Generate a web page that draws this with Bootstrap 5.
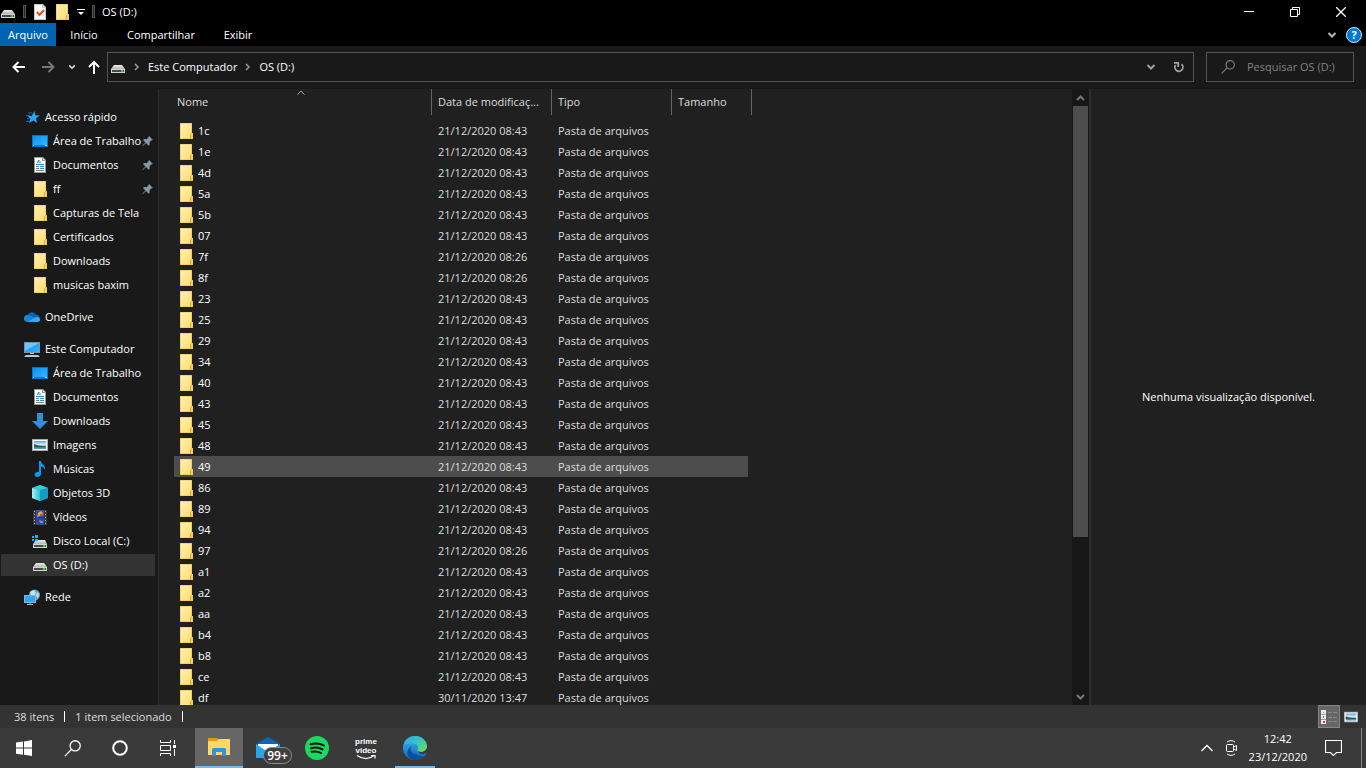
<!DOCTYPE html>
<html lang="pt-BR" data-bs-theme="dark">
<head>
<meta charset="utf-8">
<meta name="viewport" content="width=device-width, initial-scale=1">
<title>OS (D:)</title>
<link href="https://cdn.jsdelivr.net/npm/bootstrap@5.3.0/dist/css/bootstrap.min.css" rel="stylesheet">
<style>
  body { font: 11px/16px "Open Sans", "Noto Sans", sans-serif; color: #fff; background: #202020; }
  button { background: none; border: 0; padding: 0; color: inherit; font: inherit; }
  a { color: inherit; text-decoration: none; }
  svg { display: block; flex: none; }
  .title-bar { height: 23px; background: #000; gap: 7px; padding-right: 2px; }
  .tool-sep { width: 3px; height: 13px; border: 1px solid #555; background: #222; }
  .win-btn { width: 46px; height: 23px; display: flex; align-items: center; justify-content: center; }
  .ribbon { height: 23px; background: #000; }
  .ribbon a { line-height: 23px; text-align: center; width: 56px; }
  .ribbon a.wide { width: 98px; }
  .ribbon a.active { background: #0063b1; }
  .ribbon button { margin-left: 9px; }
  .address-row { height: 43px; background: #191919; padding: 0 12px 1px; }
  .nav-tools { gap: 12px; margin-right: 7px; }
  .address-box, .search-box { height: 30px; border: 1px solid #535353; }
  .address-box { gap: 8px; padding: 0 7px 0 2px; }
  .search-box { width: 148px; margin-left: 12px; padding-left: 14px; gap: 12px; }
  .search-box input { background: none; border: 0; color: #8a8a8a; padding: 0; outline: 0; font: inherit; min-width: 0; width: 100%; }
  .search-box input::placeholder { color: #838383; opacity: 1; }
  .work-area { min-height: 0; }
  .tree { width: 159px; background: #191919; border-right: 1px solid #2b2b2b; padding-top: 16px; padding-right: 3px; }
  .tree a { height: 24px; border: solid #191919; border-width: 1px 0 1px 1px; white-space: nowrap; }
  .tree a > svg { margin-right: 5px; }
  .tree a > .pin-mark { margin-left: auto; margin-right: 1px; }
  .tree .root { padding-left: 23px; }
  .tree .leaf { padding-left: 31px; }
  .tree .current { background: #333; }
  .tree ul + ul { margin-top: 8px; }
  .files { width: 578px; table-layout: fixed; margin-left: 15px; border-collapse: collapse; color: #dedede; }
  .files th { height: 31px; padding: 0; font-weight: 400; vertical-align: top; }
  .files th > div { height: 26px; border-right: 1px solid #636363; padding-left: 6px; display: flex; align-items: center; position: relative; white-space: nowrap; }
  .files th:first-child > div { padding-left: 3px; }
  .files td { height: 21px; padding: 0 0 0 6px; line-height: 20px; white-space: nowrap; }
  .files td svg { margin-top: 2px; }
  .files td:first-child { color: #fff; padding-left: 4px; }
  .files td > div { gap: 4px; }
  .files .picked td:not(:last-child) { background: #4d4d4d; }
  .files td:last-child { padding: 0; }
  .col-name { width: 258px; }
  .col-mid { width: 120px; }
  .col-size { width: 76px; }
  .col-end { width: 4px; }
  .sort-mark { position: absolute; left: 123px; top: 1px; }
  .scroll-track { width: 17px; background: #171717; padding: 0 1px; }
  .scroll-thumb { height: 74%; background: #4d4d4d; }
  .scroll-arrow { height: 17px; display: flex; align-items: center; justify-content: center; width: 100%; }
  .preview { width: 277px; border-left: 2px solid #2e2e2e; }
  .status-bar { height: 23px; background: #333; color: #dedede; padding-left: 14px; gap: 10px; }
  .status-sep { width: 1px; height: 11px; background: #fff; }
  .view-btn { width: 22px; height: 23px; display: flex; align-items: center; justify-content: center; }
  .view-btn.on { background: #666; border: 1px solid #858585; }
  .task-bar { height: 40px; background: #3a3a3a; }
  .task-btn { width: 48px; height: 40px; display: flex; align-items: center; justify-content: center; position: relative; }
  .task-btn.front { background: #666; border-bottom: 2px solid #76b9ed; }
  .task-btn.open::after { content: ""; position: absolute; left: 4px; right: 4px; bottom: 0; height: 2px; background: #76b9ed; }
  .apps { gap: 1px; margin-left: 3px; }
  .mail-count { position: absolute; left: 19px; top: 19px; width: 29px; height: 17px; border: 1px solid #8c8c8c; border-radius: 9px; background: #3f3f3f; font-size: 12px; line-height: 15px; font-weight: 600; }
  .prime { font: 700 8px/9px "Liberation Sans", sans-serif; }
  .tray { gap: 12px; }
  .clock { line-height: 18px; text-align: center; }
  .notice { margin: 0 7px 0 6px; }
  .desk-edge { width: 5px; height: 40px; border-left: 1px solid #858585; }
</style>
</head>
<body>
<svg width="0" height="0" class="position-absolute" aria-hidden="true">
  <defs>
    <linearGradient id="gold" x2="1" y2="1"><stop stop-color="#fff0b4"/><stop offset="1" stop-color="#ffdc70"/></linearGradient>
    <linearGradient id="blue" x2="1" y2="1"><stop stop-color="#0f92f5"/><stop offset="1" stop-color="#35b2ff"/></linearGradient>
    <linearGradient id="sea" x2="0" y2="1"><stop stop-color="#5d9de6"/><stop offset=".45" stop-color="#d6efff"/><stop offset=".6" stop-color="#8cc0c8"/><stop offset="1" stop-color="#4b93c6"/></linearGradient>
    <linearGradient id="metal" x2="0" y2="1"><stop stop-color="#eee"/><stop offset="1" stop-color="#b4b4b4"/></linearGradient>
    <linearGradient id="cube" x2="1"><stop stop-color="#a8f4f4"/><stop offset="1" stop-color="#29c2d0"/></linearGradient>
    <linearGradient id="edgeBlue" x2="0" y2="1"><stop stop-color="#35b8ee"/><stop offset="1" stop-color="#1068c0"/></linearGradient>
    <linearGradient id="edgeGreen" x2="1" y2="1"><stop stop-color="#2fa4e8"/><stop offset=".5" stop-color="#36c7c0"/><stop offset="1" stop-color="#75e53c"/></linearGradient>
  </defs>
  <symbol id="folder" viewBox="0 0 16 16"><path d="M2 0h12v10h1v6H2z" fill="#e8bd3d"/><path d="M2.500.5h11v10l-.5 1v4H2.500z" fill="url(#gold)"/><path d="M13.500 10.500h1v5h-1z" fill="#ffe07c"/><path d="M12.500 15.500v-4l1-1" stroke="#dcae2d" fill="none"/></symbol>
  <symbol id="drive" viewBox="0 0 16 16"><path d="M4 6h8l3 4H1z" fill="url(#metal)"/><path d="M1 10h14v4H1z" fill="#d2d2d2"/><path d="M2 11h12v2H2z" fill="#4a4a4a"/><path d="M11 11h2v2h-2z" fill="#35d835"/></symbol>
  <symbol id="cdrive" viewBox="0 0 16 16"><path d="M4 7h9l2 4H1z" fill="url(#metal)"/><path d="M1 11h14v4H1z" fill="#d2d2d2"/><path d="M2 12h12v2H2z" fill="#4a4a4a"/><path d="M11 12h2v2h-2z" fill="#35d835"/><path d="M0 3h2v2H0zm3-1h3v3H3zM0 6h2v2H0zm3 0h3v2H3z" fill="#19b4ef"/></symbol>
  <symbol id="desktop" viewBox="0 0 16 16"><path d="M0 2h16v12H0z" fill="#0078d7"/><path d="M1 3h14v9H1z" fill="url(#blue)"/><path d="M1 12.500h1m11 0h2" stroke="#fff"/></symbol>
  <symbol id="doc" viewBox="0 0 16 16"><path d="M2 0h9l3 3v13H2z" fill="#999"/><path d="M3 1h7v3h3v11H3z" fill="#fff"/><path d="M11 1v2h2" fill="#ddd"/><path d="M5 6l2-3v3m1-1h1M4 7.500h8M8 9.500h4M8 11.500h4" stroke="#188fd5" fill="none"/><path d="M4 9.500h3M4 11.500h3M4 13.500h8" stroke="#73818d"/></symbol>
  <symbol id="star" viewBox="0 0 16 16"><path d="M10.500 2l.8 4.200 4.700.3-4 2.700 1 4.800-3.500-2.500L5 14l1.500-4.500L3.500 7h4.200z" fill="#28a8f3"/><path d="M4 4h4M2 6.500h4M3 9.500h3M2 12.500h3" stroke="#126cab"/></symbol>
  <symbol id="pin" viewBox="0 0 12 12"><path d="M7 1l4 4-1.500.3-2 2 .2 2.500-1 1L4 8 1 11l-.5-.5 3-3L1 5l1-1 2.500.3 2-2z" fill="#8c979f"/></symbol>
  <symbol id="cloud" viewBox="0 0 16 16"><path d="M4 11a4 4 0 01.5-6A4.500 4.500 0 0112 5.500 4 4 0 0115 12z" fill="#0a63b6"/><path d="M3 13A3.500 3.500 0 014 6l7 3 2 4z" fill="#1686d8"/><path d="M4 13l7-4.500c3-1 5 0 5 2.500 0 1-1 2-2 2z" fill="#38a9ee"/></symbol>
  <symbol id="pc" viewBox="0 0 16 16"><path d="M0 1h16v11H0z" fill="#7895a8"/><path d="M1 2h14v9H1z" fill="url(#blue)"/><path d="M1 2h14L1 10z" fill="#6ac5ff"/><path d="M6 12h4v1H6zM2 14h12l2 2H0z" fill="#b7cad5"/></symbol>
  <symbol id="down" viewBox="0 0 16 16"><path d="M5 0h6v8h5l-8 8-8-8h5z" fill="#2f8de4"/></symbol>
  <symbol id="image" viewBox="0 0 16 16"><path d="M0 2h16v12H0z" fill="#aaa"/><path d="M1 3h14v10H1z" fill="#fff"/><path d="M2 4h12v8H2z" fill="url(#sea)"/><path d="M2 7l4 1.500 8 1v1H2z" fill="#2b5951"/></symbol>
  <symbol id="music" viewBox="0 0 16 16"><path d="M7 0h2c0 4 5 3.500 4 9-1-3-3-3.500-4-3.500V13c0 2-2 3-4 3-3 0-3.500-4 0-5h2z" fill="#069af3"/></symbol>
  <symbol id="cube3d" viewBox="0 0 16 16"><path d="M0 3l8-3 8 3v10l-8 3-8-3z" fill="#19b0c5"/><path d="M0 3l8 2v11l-8-3z" fill="url(#cube)"/><path d="M0 3l8-3 8 3-8 2z" fill="#40c7d2"/><path d="M8 5l8-2v10l-8 3z" fill="#149cc2"/></symbol>
  <symbol id="video" viewBox="0 0 16 16"><path d="M1 1h14v15H1z" fill="#3b3b3b"/><path d="M4 1h8v7H4z" fill="#37529c"/><path d="M4 9h8v7H4z" fill="#2a4a9b"/><path d="M6 4l3-2 2 2-2 3H6z" fill="#d8b038"/><path d="M8 5h3v2H8zM7 11h2v2H7z" fill="#d14b3c"/><path d="M5 6h2v2H5zM8 12h3v2H8z" fill="#4d9ddc"/><path d="M2.500 2v14M13.500 2v14" stroke="#aaa" stroke-dasharray="1 2"/></symbol>
  <symbol id="net" viewBox="0 0 16 16"><circle cx="10.500" cy="6" r="5.500" fill="#6aa5c0"/><path d="M6 3l4-2 2 3-2 3-3-1zm7 0l2 2-1 4-2-2z" fill="#c5e3ec"/><path d="M0 6h12v8H0z" fill="#8bb4cd"/><path d="M1 7h10v6H1z" fill="#2ba7fc"/><path d="M3 15.500h6M6 14v2" stroke="#a5bac6"/></symbol>
  <symbol id="chev-d" viewBox="0 0 10 6"><path d="M1.500 1L5 4.500 8.500 1" fill="none" stroke="currentColor" stroke-width="2"/></symbol>
  <symbol id="lens" viewBox="0 0 16 16"><circle cx="10.500" cy="5.500" r="4.800" fill="none" stroke="currentColor" stroke-width="1.200"/><path d="M7 9L.8 15.200" stroke="currentColor" stroke-width="1.200"/></symbol>
</svg>

<div class="d-flex flex-column vh-100 overflow-hidden">
  <header>
    <div class="title-bar d-flex align-items-center">
      <svg width="16" height="16"><use href="#drive"/></svg>
      <span class="tool-sep"></span>
      <button aria-label="Propriedades"><svg width="14" height="16" viewBox="0 0 14 16"><path d="M1 0h9l3 3v13H1z" fill="#c9c9c9"/><path d="M2 1h7v3h3v11H2z" fill="#fafafa"/><path d="M4 8l2.500 3L11 6" fill="none" stroke="#e2521b" stroke-width="2"/></svg></button>
      <button aria-label="Nova pasta"><svg width="16" height="16"><use href="#folder"/></svg></button>
      <button aria-label="Personalizar"><svg width="8" height="8" viewBox="0 0 8 8"><path d="M0 1.500h8" stroke="#fff"/><path d="M1 4h6L4 7z" fill="#fff"/></svg></button>
      <span class="tool-sep"></span>
      <span>OS (D:)</span>
      <div class="ms-auto d-flex">
        <button class="win-btn" aria-label="Minimizar"><svg width="10" height="10"><path d="M0 4.500h10" stroke="#fff"/></svg></button>
        <button class="win-btn" aria-label="Restaurar"><svg width="10" height="10" fill="none" stroke="#fff"><path d="M.5 2.500h7v7h-7zM2.500 2V.5h7v7H8"/></svg></button>
        <button class="win-btn" aria-label="Fechar"><svg width="10" height="10" stroke="#fff" stroke-width="1.300"><path d="M0 0l10 10M10 0L0 10"/></svg></button>
      </div>
    </div>
    <nav class="ribbon d-flex align-items-center">
      <a href="#" class="active">Arquivo</a>
      <a href="#">Início</a>
      <a href="#" class="wide">Compartilhar</a>
      <a href="#">Exibir</a>
      <button class="ms-auto" aria-label="Expandir faixa"><svg width="10" height="6" color="#b5b5b5"><use href="#chev-d"/></svg></button>
      <button class="me-1" aria-label="Ajuda"><svg width="16" height="16" viewBox="0 0 16 16"><circle cx="8" cy="8" r="7.500" fill="#0078d7" stroke="#cfe8fb"/><text x="8" y="12" text-anchor="middle" font-size="11" font-weight="700" fill="#fff">?</text></svg></button>
    </nav>
    <div class="address-row d-flex align-items-center">
      <div class="nav-tools d-flex align-items-center">
        <button aria-label="Voltar"><svg width="14" height="12" fill="none" stroke="#fff" stroke-width="2"><path d="M13 6H2M6.500 1L1.500 6l5 5"/></svg></button>
        <button class="ps-1" aria-label="Avançar"><svg width="14" height="12" fill="none" stroke="#777" stroke-width="2"><path d="M0 6h11M6.500 1l5 5-5 5"/></svg></button>
        <button aria-label="Recentes"><svg width="8" height="6" color="#ddd"><use href="#chev-d"/></svg></button>
        <button aria-label="Acima"><svg width="12" height="14" fill="none" stroke="#fff" stroke-width="2"><path d="M6 14V2M1 7l5-5 5 5"/></svg></button>
      </div>
      <div class="address-box d-flex align-items-center flex-grow-1">
        <svg width="16" height="16"><use href="#drive"/></svg>
        <svg width="6" height="8" fill="none" stroke="#999" stroke-width="1.500"><path d="M1 1l3 3-3 3"/></svg>
        <a href="#">Este Computador</a>
        <svg width="6" height="8" fill="none" stroke="#999" stroke-width="1.500"><path d="M1 1l3 3-3 3"/></svg>
        <a href="#">OS (D:)</a>
        <button class="ms-auto me-2" aria-label="Locais anteriores"><svg width="10" height="6" color="#a0a0a0"><use href="#chev-d"/></svg></button>
        <button aria-label="Atualizar"><svg width="14" height="14" fill="none" stroke="#a0a0a0" stroke-width="1.800"><path d="M9.500 4.200A4 4 0 113.600 5M2 2.800h4.200V7"/></svg></button>
      </div>
      <label class="search-box d-flex align-items-center"><svg width="14" height="14" color="#838383"><use href="#lens"/></svg><input type="search" placeholder="Pesquisar OS (D:)" aria-label="Pesquisar OS (D:)"></label>
    </div>
  </header>

  <main class="work-area d-flex flex-grow-1 overflow-hidden">
    <nav class="tree flex-shrink-0" id="tree"></nav>
    <section class="flex-grow-1 overflow-hidden">
      <table class="files">
        <colgroup><col class="col-name"><col class="col-mid"><col class="col-mid"><col class="col-size"><col class="col-end"></colgroup>
        <thead><tr>
          <th><div>Nome<svg class="sort-mark" width="8" height="5" fill="none" stroke="#aaa"><path d="M.5 4.500L4 1l3.500 3.500"/></svg></div></th>
          <th><div>Data de modificaç...</div></th><th><div>Tipo</div></th><th colspan="2"><div>Tamanho</div></th>
        </tr></thead>
        <tbody id="rows"></tbody>
      </table>
    </section>
    <div class="scroll-track d-flex flex-column flex-shrink-0">
      <button class="scroll-arrow" aria-label="Rolar para cima"><svg width="9" height="6" fill="none" stroke="#777" stroke-width="2"><path d="M1 5l3.500-3.500L8 5"/></svg></button>
      <div class="flex-grow-1"><div class="scroll-thumb"></div></div>
      <button class="scroll-arrow" aria-label="Rolar para baixo"><svg width="9" height="6" fill="none" stroke="#777" stroke-width="2"><path d="M1 1l3.500 3.500L8 1"/></svg></button>
    </div>
    <aside class="preview flex-shrink-0 d-flex align-items-center justify-content-center">Nenhuma visualização disponível.</aside>
  </main>

  <footer>
    <div class="status-bar d-flex align-items-center">
      <span>38 itens</span><span class="status-sep"></span>
      <span>1 item selecionado</span><span class="status-sep"></span>
      <div class="ms-auto me-1 d-flex">
        <button class="view-btn on" aria-label="Detalhes"><svg width="18" height="14" viewBox="0 0 18 14"><path d="M1 0h5v14H1z" fill="#eee"/><path d="M1 4.500h5M1 9.500h5" stroke="#999"/><path d="M3 2h1v1H3z" fill="#888"/><path d="M3 6h1v2H3z" fill="#1f7ed0"/><path d="M3 11h2v2H3z" fill="#d33"/><path d="M8 2.500h4m1 0h4M8 7.500h4m1 0h4M8 11.500h4m1 0h4" stroke="#8b8b8b"/></svg></button>
        <button class="view-btn" aria-label="Ícones grandes"><svg width="14" height="14"><use href="#image"/></svg></button>
      </div>
    </div>
    <div class="task-bar d-flex align-items-center">
      <button class="task-btn" aria-label="Iniciar"><svg width="16" height="16" fill="#fff"><path d="M0 2.500L7 1.500V7.500H0zM8 1.400L16 0v7.500H8zM0 8.500h7v6.200L0 13.700zM8 8.500h8V16L8 14.800z"/></svg></button>
      <button class="task-btn" aria-label="Pesquisar"><svg width="17" height="17" color="#fff"><use href="#lens"/></svg></button>
      <button class="task-btn" aria-label="Cortana"><svg width="16" height="16" fill="none" stroke="#fff" stroke-width="2"><circle cx="8" cy="8" r="6.800"/></svg></button>
      <button class="task-btn" aria-label="Visão de tarefas"><svg width="17" height="16" fill="none" stroke="#fff"><path d="M.5 0v2.500h10V0M.5 5.500h10v5H.5zM.5 16v-2.500h10V16M14.500 0v4m0 5v7"/><path d="M13 5h3v3h-3z" fill="#fff" stroke="none"/></svg></button>
      <div class="apps d-flex">
        <button class="task-btn front" aria-label="Explorador de Arquivos"><svg width="22" height="18" viewBox="0 0 22 18"><path d="M0 1h22v16H0z" fill="#ffd667"/><path d="M0 0h9l1 1-1 2H0z" fill="#e29a05"/><path d="M4 11l1-1h12l1 1v7h-4v-4H8v4H4z" fill="#2e94e0"/></svg></button>
        <button class="task-btn" aria-label="Email"><svg width="24" height="24" viewBox="0 0 24 24"><path d="M0 8l12-7 12 7v14H0z" fill="#0a66bd"/><path d="M2 8h20v9H2z" fill="#fff"/><path d="M0 8l12 8L24 8v14H0z" fill="#2aa5ec"/><path d="M2 8h20l-10 7z" fill="#fff"/></svg><span class="mail-count">99+</span></button>
        <button class="task-btn" aria-label="Spotify"><svg width="24" height="24"><circle cx="12" cy="12" r="12" fill="#1ed760"/><path d="M5.500 8.300c4.500-1.300 9.500-.9 13.500 1.300M6 12.200c4-1 8-.7 11.500 1.200M6.500 15.800c3.500-.8 6.500-.5 9.500 1.200" fill="none" stroke="#111" stroke-width="2" stroke-linecap="round"/></svg></button>
        <button class="task-btn prime flex-column" aria-label="Prime Video"><span>prime</span><span>video</span><svg width="20" height="5" fill="none" stroke="#fff" stroke-width="1.200"><path d="M1 .5c6 4 12 4 17 0M15 .5h4v3"/></svg></button>
        <button class="task-btn open" aria-label="Microsoft Edge"><svg width="24" height="24" viewBox="0 0 24 24"><circle cx="12" cy="12" r="12" fill="url(#edgeBlue)"/><path d="M9 10c-3 3-1 8 5 8 3 0 6 0 9-2-2 5-6 8-11 8C6 24 3 18 5 14c1-2 2-3 4-4z" fill="#0c4f9e"/><path d="M.5 9C2 3 7 0 12 0c7 0 12 5 12 10 0 4-3 6-6 6-2 0-4-1-3.500-2 2-3 0-6-4-6.500C6 7 2 8 .5 9z" fill="url(#edgeGreen)"/><path d="M11 12c-.5 3 2 6 6 6 2.500 0 4.500-.5 6-2l1 1-2 3c-6 1-13-2-11-8z" fill="#1673c8"/><path d="M24 12v4.500c-3 2-8 2-9-1.500 2 1.500 7 1.500 9-3z" fill="#3a3a3a"/></svg></button>
      </div>
      <div class="tray ms-auto d-flex align-items-center">
        <button aria-label="Ícones ocultos"><svg width="12" height="8" fill="none" stroke="#fff" stroke-width="1.300"><path d="M.5 7L6 1.500 11.500 7"/></svg></button>
        <button aria-label="Reunir agora"><svg width="12" height="16" fill="none" stroke="#fff"><path d="M2.500 4.500h5a1 1 0 011 1v5a1 1 0 01-1 1h-5a1 1 0 01-1-1v-5a1 1 0 011-1zM8.500 7l3-1.500v5L8.500 9M2 2.200c2-2 6-2 8 0M2 13.800c2 2 6 2 8 0"/></svg></button>
        <button class="clock">12:42<br>23/12/2020</button>
        <button class="notice" aria-label="Notificações"><svg width="17" height="16" fill="none" stroke="#fff" stroke-width="1.200"><path d="M.5.5h16v12h-5L8.500 15.500 5.500 12.500h-5z"/></svg></button>
        <button class="desk-edge" aria-label="Mostrar área de trabalho"></button>
      </div>
    </div>
  </footer>
</div>

<script src="https://cdn.jsdelivr.net/npm/bootstrap@5.3.0/dist/js/bootstrap.bundle.min.js"></script>
<script>
  const icon = (id, size = 16) => `<svg width="${size}" height="${size}"><use href="#${id}"/></svg>`;

  // Each group: root entry first, then its children as [icon, label, pinned or current]
  const groups = [
    [['star', 'Acesso rápido'], ['desktop', 'Área de Trabalho', 'pin'], ['doc', 'Documentos', 'pin'], ['folder', 'ff', 'pin'],
     ['folder', 'Capturas de Tela'], ['folder', 'Certificados'], ['folder', 'Downloads'], ['folder', 'musicas baxim']],
    [['cloud', 'OneDrive']],
    [['pc', 'Este Computador'], ['desktop', 'Área de Trabalho'], ['doc', 'Documentos'], ['down', 'Downloads'], ['image', 'Imagens'],
     ['music', 'Músicas'], ['cube3d', 'Objetos 3D'], ['video', 'Vídeos'], ['cdrive', 'Disco Local (C:)'], ['drive', 'OS (D:)', 'current']],
    [['net', 'Rede']]
  ];
  document.getElementById('tree').innerHTML = groups.map(g => '<ul class="list-unstyled mb-0">' + g.map(([ic, label, flag], i) =>
    `<li><a href="#" class="d-flex align-items-center ${i ? 'leaf' : 'root'} ${flag === 'current' ? 'current' : ''}">${icon(ic)}<span>${label}</span>${flag === 'pin' ? '<span class="pin-mark">' + icon('pin', 12) + '</span>' : ''}</a></li>`
  ).join('') + '</ul>').join('');

  const names = '1c 1e 4d 5a 5b 07 7f 8f 23 25 29 34 40 43 45 48 49 86 89 94 97 a1 a2 aa b4 b8 ce df'.split(' ');
  const times = { '7f': '21/12/2020 08:26', '8f': '21/12/2020 08:26', '97': '21/12/2020 08:26', 'df': '30/11/2020 13:47' };
  document.getElementById('rows').innerHTML = names.map(n =>
    `<tr class="${n === '49' ? 'picked' : ''}"><td><div class="d-flex">${icon('folder')}<span>${n}</span></div></td><td>${times[n] || '21/12/2020 08:43'}</td><td>Pasta de arquivos</td><td></td><td></td></tr>`
  ).join('');
</script>
</body>
</html>
